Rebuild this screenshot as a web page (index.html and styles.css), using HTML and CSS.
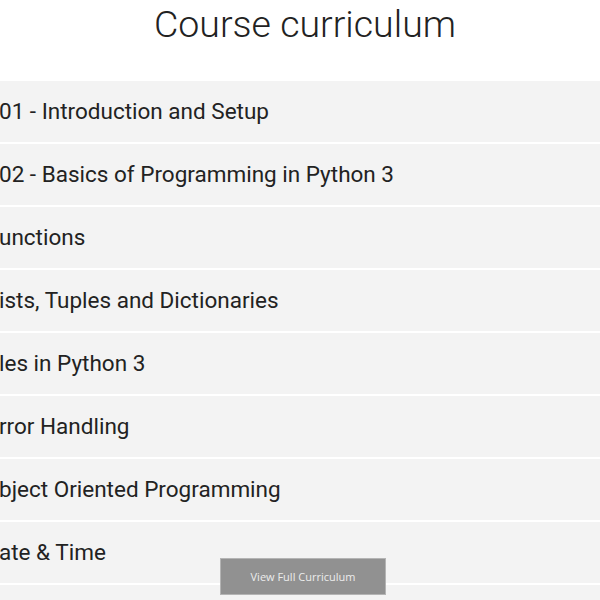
FILE: index.html
```html
<!DOCTYPE html>
<html lang="en">
<head>
  <meta charset="UTF-8">
  <meta name="viewport" content="width=device-width, initial-scale=1.0">
  <title>Course curriculum</title>
  <link rel="stylesheet" href="styles.css">
</head>
<body>
  <section class="curriculum">
    <h1>Course curriculum</h1>

    <ul class="lesson-list">
      <li class="lesson">01 - Introduction and Setup</li>
      <li class="lesson">02 - Basics of Programming in Python 3</li>
      <li class="lesson">unctions</li>
      <li class="lesson">ists, Tuples and Dictionaries</li>
      <li class="lesson">les in Python 3</li>
      <li class="lesson">rror Handling</li>
      <li class="lesson">bject Oriented Programming</li>
      <li class="lesson">ate &amp; Time</li>
      <li class="lesson"></li>
    </ul>

    <button class="view-all" type="button">View Full Curriculum</button>
  </section>
</body>
</html>
```

FILE: styles.css
```css
/* General Styles */
* {
  margin: 0;
  padding: 0;
  box-sizing: border-box;
}

body {
  font-family: Roboto, 'Liberation Sans', sans-serif;
  background: #fff;
  color: #222;
  overflow: hidden;
}

h1 {
  font-weight: 300;
  font-size: 37.5px;
  line-height: 48px;
  text-align: center;
  color: #222;
  padding-left: 10px;
  margin-bottom: 33px;
}

/* Lesson rows */
.lesson-list {
  list-style: none;
}

.lesson {
  height: 61px;
  line-height: 61px;
  margin-bottom: 2px;
  margin-left: -1px;
  background: #f3f3f3;
  font-size: 22.5px;
  white-space: nowrap;
}

/* Floating button */
.view-all {
  position: fixed;
  left: 220px;
  top: 558px;
  width: 166px;
  height: 37px;
  background: #919191;
  border: 1px solid #b4b4b4;
  color: #ececec;
  font-family: 'Open Sans', sans-serif;
  font-size: 11px;
  cursor: pointer;
}
```
